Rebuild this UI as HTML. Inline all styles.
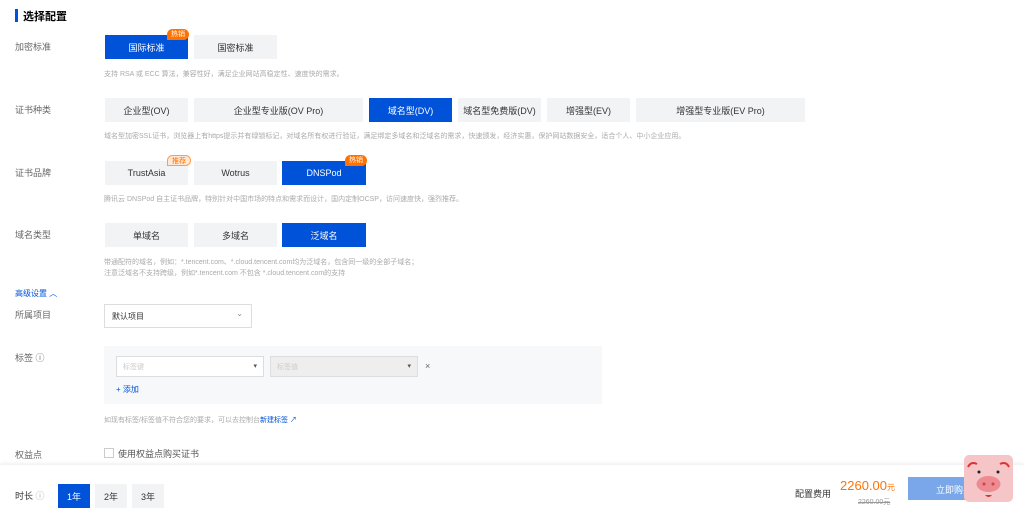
<!DOCTYPE html>
<html><head><meta charset="utf-8"><style>
*{margin:0;padding:0;box-sizing:border-box}
body{width:1024px;height:514px;position:relative;overflow:hidden;background:#fff;font-family:"Liberation Sans","Noto Sans CJK SC",sans-serif;font-size:9px;color:#333}
.a{position:absolute;white-space:nowrap}
.lab{color:#666;font-size:9px}
.b{position:absolute;height:24px;background:#f2f3f5;color:#333;font-size:9px;display:flex;align-items:center;justify-content:center}
.b.on{background:#0052d9;color:#fff}
.d{color:#aaa;font-size:7px}
.tag{position:absolute;background:#ff7200;color:#fff;font-size:7px;border-radius:6px 6px 6px 0;padding:0 4px;height:11px;line-height:11px}
</style></head><body>
<div class="a" style="left:15px;top:9px;width:3px;height:13px;background:#0052d9"></div>
<div class="a" style="left:23px;top:8px;font-size:11px;font-weight:bold;color:#000">选择配置</div>

<div class="a lab" style="left:15px;top:40px">加密标准</div>
<div class="b on" style="left:105px;top:35px;width:83px">国际标准</div>
<div class="b" style="left:194px;top:35px;width:83px">国密标准</div>
<div class="tag" style="left:167px;top:29px">热销</div>
<div class="a d" style="left:104px;top:69px">支持 RSA 或 ECC 算法，兼容性好，满足企业网站高稳定性、速度快的需求。</div>

<div class="a lab" style="left:15px;top:103px">证书种类</div>
<div class="b" style="left:105px;top:98px;width:83px">企业型(OV)</div>
<div class="b" style="left:194px;top:98px;width:169px">企业型专业版(OV Pro)</div>
<div class="b on" style="left:369px;top:98px;width:83px">域名型(DV)</div>
<div class="b" style="left:458px;top:98px;width:83px">域名型免费版(DV)</div>
<div class="b" style="left:547px;top:98px;width:83px">增强型(EV)</div>
<div class="b" style="left:636px;top:98px;width:169px">增强型专业版(EV Pro)</div>
<div class="a d" style="left:104px;top:131px">域名型加密SSL证书，浏览器上有https提示并有绿锁标记，对域名所有权进行验证，满足绑定多域名和泛域名的需求，快速颁发，经济实惠，保护网站数据安全，适合个人、中小企业应用。</div>

<div class="a lab" style="left:15px;top:166px">证书品牌</div>
<div class="b" style="left:105px;top:161px;width:83px">TrustAsia</div>
<div class="b" style="left:194px;top:161px;width:83px">Wotrus</div>
<div class="b on" style="left:282px;top:161px;width:84px">DNSPod</div>
<div class="tag" style="left:167px;top:155px;background:#ffe8d6;color:#ff7200;border:1px solid #ff9c50">推荐</div>
<div class="tag" style="left:345px;top:155px">热销</div>
<div class="a d" style="left:104px;top:194px">腾讯云 DNSPod 自主证书品牌，特别针对中国市场的特点和需求而设计，国内定制OCSP，访问速度快，强烈推荐。</div>

<div class="a lab" style="left:15px;top:228px">域名类型</div>
<div class="b" style="left:105px;top:223px;width:83px">单域名</div>
<div class="b" style="left:194px;top:223px;width:83px">多域名</div>
<div class="b on" style="left:282px;top:223px;width:84px">泛域名</div>
<div class="a d" style="left:104px;top:257px">带通配符的域名，例如：*.tencent.com、*.cloud.tencent.com均为泛域名，包含同一级的全部子域名；</div>
<div class="a d" style="left:104px;top:268px">注意泛域名不支持跨级，例如*.tencent.com 不包含 *.cloud.tencent.com的支持</div>

<div class="a" style="left:15px;top:288px;color:#0052d9;font-size:8px">高级设置 ︿</div>
<div class="a lab" style="left:15px;top:308px">所属项目</div>
<div class="a" style="left:104px;top:304px;width:148px;height:24px;border:1px solid #ddd;font-size:8px;padding:6px 7px;color:#333">默认项目<span style="position:absolute;right:8px;top:4px;color:#888">⌄</span></div>

<div class="a lab" style="left:15px;top:351px">标签 ⓘ</div>
<div class="a" style="left:104px;top:346px;width:498px;height:58px;background:#f7f8fa"></div>
<div class="a" style="left:116px;top:356px;width:148px;height:21px;background:#fff;border:1px solid #ddd;font-size:7px;color:#ccc;padding:5px 6px">标签键<span style="position:absolute;right:6px;color:#555">▾</span></div>
<div class="a" style="left:270px;top:356px;width:148px;height:21px;background:#eee;border:1px solid #ddd;font-size:7px;color:#ccc;padding:5px 6px">标签值<span style="position:absolute;right:6px;color:#555">▾</span></div>
<div class="a" style="left:425px;top:361px;color:#666;font-size:9px">×</div>
<div class="a" style="left:116px;top:384px;color:#0052d9;font-size:8px">+ 添加</div>
<div class="a d" style="left:104px;top:415px">如现有标签/标签值不符合您的要求，可以去控制台<span style="color:#0052d9">新建标签 ↗</span></div>

<div class="a lab" style="left:15px;top:448px">权益点</div>
<div class="a" style="left:104px;top:448px;width:10px;height:10px;border:1px solid #ccc"></div>
<div class="a" style="left:118px;top:447px;color:#555;font-size:9px">使用权益点购买证书</div>

<div class="a" style="left:0;top:465px;width:1024px;height:49px;background:#fff;box-shadow:0 -2px 3px rgba(0,0,0,.06)"></div>
<div class="a lab" style="left:15px;top:489px;color:#333">时长 <span style="color:#aaa">ⓘ</span></div>
<div class="b on" style="left:58px;top:484px;width:32px">1年</div>
<div class="b" style="left:95px;top:484px;width:32px">2年</div>
<div class="b" style="left:132px;top:484px;width:32px">3年</div>
<div class="a" style="left:795px;top:487px;font-size:9px;color:#333">配置费用</div>
<div class="a" style="left:840px;top:478px;font-size:13px;color:#ff7200">2260.00<span style="font-size:8px">元</span></div>
<div class="a" style="left:858px;top:497px;font-size:7px;color:#999;text-decoration:line-through">2260.00元</div>
<div class="a" style="left:908px;top:477px;width:90px;height:23px;background:#7aa7ea;color:#fff;font-size:9px;padding:6px 28px">立即购买</div>
<svg class="a" style="left:964px;top:455px" width="49" height="47" viewBox="0 0 49 47">
<rect x="0" y="0" width="49" height="47" rx="5" fill="#f6c5c7"/>
<path d="M4 12 Q7 6 13 9" stroke="#d33" stroke-width="2" fill="none"/>
<path d="M36 9 Q42 6 45 12" stroke="#d33" stroke-width="2" fill="none"/>
<circle cx="15" cy="17" r="1.5" fill="#222"/><circle cx="34" cy="17" r="1.5" fill="#222"/>
<ellipse cx="24.5" cy="29" rx="12" ry="8" fill="#ee8a92"/>
<circle cx="20" cy="29" r="1.5" fill="#c44"/><circle cx="29" cy="29" r="1.5" fill="#c44"/>
<path d="M21 40 Q24.5 44 28 40Z" fill="#d33"/>
</svg>
</body></html>
